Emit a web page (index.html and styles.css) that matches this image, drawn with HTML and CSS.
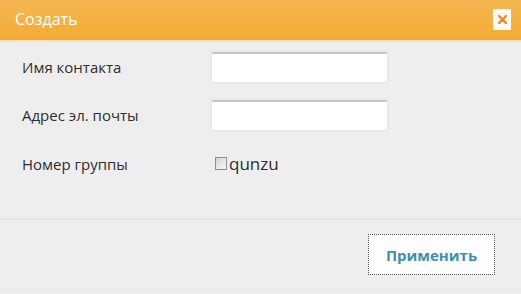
FILE: index.html
```html
<!DOCTYPE html>
<html>
<head>
    <title>Создать</title>
    <link rel="stylesheet" href="styles.css">
</head>
<body>
    <div class="dialog">
        <div class="dialog-header">
            <span class="dialog-title">Создать</span>
            <button class="close-button">
                <svg width="9" height="9" viewBox="0 0 9 9">
                    <path d="M1 1 L8 8 M8 1 L1 8" stroke="#ea8a34" stroke-width="2.4" stroke-linecap="round"/>
                </svg>
            </button>
        </div>
        <div class="dialog-body">
            <div class="form-row">
                <label for="contact-name">Имя контакта</label>
                <input type="text" id="contact-name">
            </div>
            <div class="form-row">
                <label for="contact-mail">Адрес эл. почты</label>
                <input type="text" id="contact-mail">
            </div>
            <div class="form-row group-row">
                <label>Номер группы</label>
                <div class="group-choice">
                    <span class="check-box"></span>
                    <span>qunzu</span>
                </div>
            </div>
        </div>
        <div class="dialog-footer">
            <button class="apply-button">Применить</button>
        </div>
    </div>
</body>
</html>
```

FILE: styles.css
```css
body {
    margin: 0;
    font-family: "Open Sans", "Noto Sans", sans-serif;
    background-color: #eeeeee;
}

.dialog {
    width: 521px;
    height: 294px;
    display: flex;
    flex-direction: column;
    background-color: #eeeeee;
}

.dialog-header {
    height: 40px;
    display: flex;
    align-items: center;
    justify-content: space-between;
    padding: 0 10px 0 15px;
    background: linear-gradient(#f6b551, #f4b040 60%, #f2aa34);
    border-bottom: 2px solid #fbe3b4;
}

.dialog-title {
    color: #ffffff;
    font-size: 16px;
    margin-top: -2px;
}

.close-button {
    width: 18px;
    height: 21px;
    padding: 0;
    margin-top: -1px;
    border: none;
    background-color: #fdfaf5;
    display: flex;
    align-items: center;
    justify-content: center;
}

.dialog-body {
    display: flex;
    flex-direction: column;
    gap: 18px;
    padding: 10px 0 0 22px;
    height: 166px;
    border-bottom: 2px solid #e5e5e5;
}

.form-row {
    display: flex;
    align-items: center;
}

.form-row label {
    width: 190px;
    font-size: 15px;
    color: #2e2e2e;
}

.form-row input {
    width: 175px;
    height: 28px;
    margin: 0;
    padding: 0;
    border: none;
    border-top: 2px solid #c4c4c4;
    border-radius: 2px;
    background-color: #ffffff;
    box-shadow: 0 0 0 2px #e9e9e9;
}

.group-row {
    margin-top: 4px;
}

.group-choice {
    display: flex;
    align-items: center;
    gap: 2px;
    margin-left: 3px;
    font-size: 17px;
    color: #2e2e2e;
}

.check-box {
    width: 10px;
    height: 11px;
    border: 1px solid #8e8e8e;
    background: linear-gradient(135deg, #d6d6d6, #f6f6f6);
}

.dialog-footer {
    flex: 1;
    display: flex;
    justify-content: flex-end;
    align-items: flex-start;
    padding: 14px 26px 0 0;
    border-bottom: 2px solid #e8e8e8;
    margin-bottom: 3px;
}

.apply-button {
    width: 127px;
    height: 41px;
    border: 1px dotted #555555;
    background-color: #fdfdfd;
    color: #3f8fae;
    font-family: "Open Sans", "Noto Sans", sans-serif;
    font-size: 15px;
    font-weight: bold;
}
```
